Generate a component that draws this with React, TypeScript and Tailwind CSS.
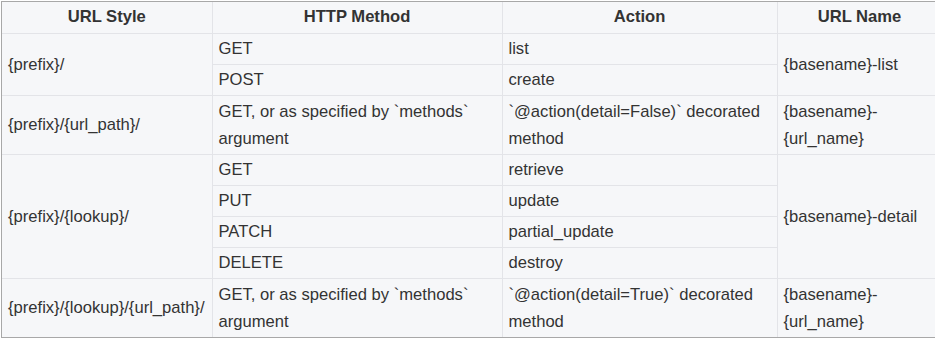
import React from "react";

const cell = "border border-[#e3e4e8] px-[6px] py-[1px] leading-[27px] align-middle text-left";

export default function App() {
  return (
    <div className="w-[935px] h-[338px] overflow-hidden bg-white pt-[2px] pl-[2px]">
      <table
        className="border-collapse w-[940px] text-[16.6px] text-[#333] bg-[#f6f7f9] outline outline-1 outline-[#a8a8a8] table-fixed"
        style={{ fontFamily: "Helvetica, 'Liberation Sans', Arial, sans-serif" }}
      >
        <colgroup>
          <col className="w-[210px]" />
          <col className="w-[290px]" />
          <col className="w-[275px]" />
          <col className="w-[165px]" />
        </colgroup>
        <thead>
          <tr className="h-[31px]">
            <th className="border border-[#e3e4e8] border-t-0 border-l-0 px-[6px] font-bold text-center">URL Style</th>
            <th className="border border-[#e3e4e8] border-t-0 px-[6px] font-bold text-center">HTTP Method</th>
            <th className="border border-[#e3e4e8] border-t-0 px-[6px] font-bold text-center">Action</th>
            <th className="border border-[#e3e4e8] border-t-0 px-[6px] font-bold text-center">URL Name</th>
          </tr>
        </thead>
        <tbody>
          <tr className="h-[31px]">
            <td rowSpan={2} className={cell + " border-l-0"}>{"{prefix}/"}</td>
            <td className={cell}>GET</td>
            <td className={cell}>list</td>
            <td rowSpan={2} className={cell}>{"{basename}-list"}</td>
          </tr>
          <tr className="h-[31px]">
            <td className={cell}>POST</td>
            <td className={cell}>create</td>
          </tr>
          <tr className="h-[59px]">
            <td className={cell + " border-l-0"}>{"{prefix}/{url_path}/"}</td>
            <td className={cell}>GET, or as specified by `methods` argument</td>
            <td className={cell}>`@action(detail=False)` decorated method</td>
            <td className={cell}>{"{basename}-"}<br />{"{url_name}"}</td>
          </tr>
          <tr className="h-[31px]">
            <td rowSpan={4} className={cell + " border-l-0"}>{"{prefix}/{lookup}/"}</td>
            <td className={cell}>GET</td>
            <td className={cell}>retrieve</td>
            <td rowSpan={4} className={cell}>{"{basename}-detail"}</td>
          </tr>
          <tr className="h-[31px]">
            <td className={cell}>PUT</td>
            <td className={cell}>update</td>
          </tr>
          <tr className="h-[31px]">
            <td className={cell}>PATCH</td>
            <td className={cell}>partial_update</td>
          </tr>
          <tr className="h-[31px]">
            <td className={cell}>DELETE</td>
            <td className={cell}>destroy</td>
          </tr>
          <tr className="h-[59px]">
            <td className={cell + " border-l-0 border-b-0"}>{"{prefix}/{lookup}/{url_path}/"}</td>
            <td className={cell + " border-b-0"}>GET, or as specified by `methods` argument</td>
            <td className={cell + " border-b-0"}>`@action(detail=True)` decorated method</td>
            <td className={cell + " border-b-0"}>{"{basename}-"}<br />{"{url_name}"}</td>
          </tr>
        </tbody>
      </table>
    </div>
  );
}
